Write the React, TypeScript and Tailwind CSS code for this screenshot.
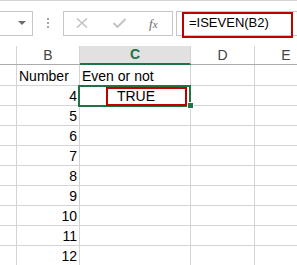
const font = { fontFamily: '"Liberation Sans", Arial, sans-serif' };

const cols = ["w-[17px]", "w-[63px]", "w-[111px]", "w-[64px]", "flex-1"];

const rows: { b: string; c: string; h: string }[] = [
  { b: "Number", c: "Even or not", h: "h-[21px]" },
  { b: "4", c: "", h: "h-[20px]" },
  { b: "5", c: "", h: "h-[20px]" },
  { b: "6", c: "", h: "h-[20px]" },
  { b: "7", c: "", h: "h-[20px]" },
  { b: "8", c: "", h: "h-[20px]" },
  { b: "9", c: "", h: "h-[20px]" },
  { b: "10", c: "", h: "h-[20px]" },
  { b: "11", c: "", h: "h-[20px]" },
  { b: "12", c: "", h: "h-[20px]" },
];

function FormulaBar() {
  return (
    <div className="flex items-center h-[46px] border-t border-[#d5d5d5] pb-[1px]">
      {/* name box */}
      <div className="-ml-[2px] w-[35px] h-[25px] border border-[#c6c6c6] bg-white flex items-center justify-end pr-[6px]">
        <svg width="8" height="4" viewBox="0 0 8 4">
          <path d="M0 0 L8 0 L4 4 Z" fill="#6d6d6d" />
        </svg>
      </div>
      <div className="w-[30px] flex flex-col items-center gap-[2px]">
        <span className="w-[2px] h-[2px] bg-[#a6a6a6]" />
        <span className="w-[2px] h-[2px] bg-[#a6a6a6]" />
        <span className="w-[2px] h-[2px] bg-[#a6a6a6]" />
      </div>
      {/* cancel / enter / fx */}
      <div className="w-[110px] h-[25px] border border-[#c6c6c6] bg-white flex items-center">
        <svg width="12" height="10" viewBox="0 0 12 10" className="ml-[12px]">
          <path d="M1 0.5 L11 9.5 M11 0.5 L1 9.5" stroke="#c3c3c3" strokeWidth="1.5" />
        </svg>
        <svg width="13" height="10" viewBox="0 0 13 10" className="ml-[25px]">
          <path d="M0.5 5 L4.5 9 L12.5 1" stroke="#c3c3c3" strokeWidth="2" fill="none" />
        </svg>
        <span
          className="ml-[23px] text-[13px] italic text-[#6b6b6b] leading-none"
          style={{ fontFamily: '"Liberation Serif", serif' }}
        >
          f<span className="text-[11px]">x</span>
        </span>
      </div>
      {/* formula input */}
      <div className="ml-[3px] flex-1 -mr-[4px] h-[25px] border border-[#c6c6c6] bg-white flex items-center pl-[12px]">
        <span className="text-[13px] text-black" style={font}>
          =ISEVEN(B2)
        </span>
      </div>
    </div>
  );
}

export default function App() {
  return (
    <div className="relative w-[297px] h-[265px] overflow-hidden bg-white" style={font}>
      <FormulaBar />

      {/* column headers */}
      <div className="flex h-[19px] border-b border-[#ababab] text-[14px] text-[#444]">
        <div className={`${cols[0]} border-r border-[#d4d4d4]`} />
        <div className={`${cols[1]} border-r border-[#d4d4d4] flex items-center justify-center`}>B</div>
        <div
          className={`${cols[2]} border-r border-[#d4d4d4] flex items-center justify-center bg-[#e1e1e1] text-[#217346] font-bold border-b-2 border-b-[#217346] -mb-[1px]`}
        >
          C
        </div>
        <div className={`${cols[3]} border-r border-[#d4d4d4] flex items-center justify-center`}>D</div>
        <div className={`${cols[4]} flex items-center justify-center pl-[20px]`}>E</div>
      </div>

      {/* cells */}
      {rows.map((r, i) => (
        <div key={i} className={`flex ${r.h} border-b border-[#d4d4d4] text-[14px] text-black`}>
          <div className={`${cols[0]} border-r border-[#d4d4d4]`} />
          <div
            className={`${cols[1]} border-r border-[#d4d4d4] flex items-center pt-[2px] ${
              i === 0 ? "justify-start pl-[2px]" : "justify-end pr-[2px]"
            }`}
          >
            {r.b}
          </div>
          <div className={`${cols[2]} border-r border-[#d4d4d4] flex items-center pt-[2px] pl-[2px] whitespace-nowrap`}>
            {i === 1 ? <span className="w-full text-center">TRUE</span> : r.c}
          </div>
          <div className={`${cols[3]} border-r border-[#d4d4d4]`} />
          <div className={cols[4]} />
        </div>
      ))}

      {/* selected cell */}
      <div className="absolute left-[78px] top-[85px] w-[113px] h-[22px] border-2 border-[#217346]" />
      <div className="absolute left-[187px] top-[102px] w-[7px] h-[7px] bg-[#217346] border border-white" />

      {/* red highlight boxes */}
      <div className="absolute left-[106px] top-[87px] w-[81px] h-[19px] border-2 border-[#c00000]" />
      <div className="absolute left-[182px] top-[12px] w-[111px] h-[26px] border-2 border-[#c00000]" />
    </div>
  );
}
